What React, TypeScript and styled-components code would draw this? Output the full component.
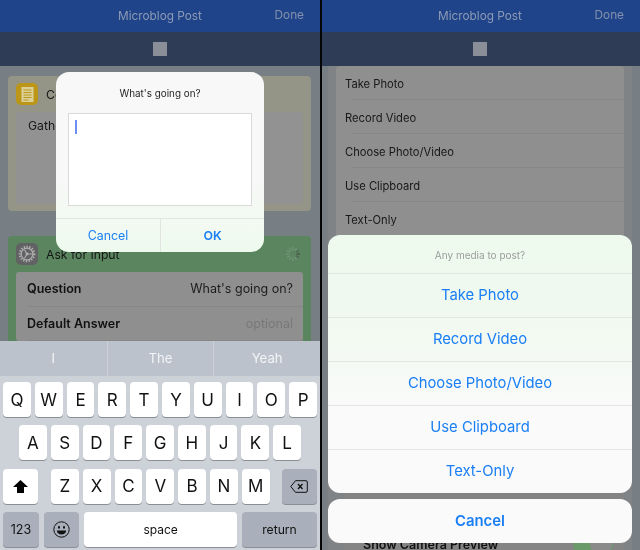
import React from 'react';
import styled, { createGlobalStyle } from 'styled-components';

const GlobalStyle = createGlobalStyle`
  html, body {
    margin: 0;
    padding: 0;
    background: #000;
  }
  * {
    box-sizing: border-box;
  }
`;

const Screen = styled.div`
  width: 640px;
  height: 550px;
  display: flex;
  overflow: hidden;
  font-family: Inter, "Liberation Sans", sans-serif;
  filter: blur(0.3px);
`;

const Phone = styled.div<{ $divided?: boolean }>`
  position: relative;
  width: 320px;
  height: 550px;
  display: flex;
  flex-direction: column;
  overflow: hidden;
  background: #777e84;

  ${(p) =>
    p.$divided &&
    `
    &::before {
      content: '';
      position: absolute;
      top: 0;
      bottom: 0;
      left: 0;
      width: 2px;
      background: #050505;
      z-index: 5;
    }
  `}
`;

const NavBar = styled.div`
  height: 32px;
  flex: none;
  position: relative;
  display: flex;
  align-items: center;
  justify-content: center;
  background: #20448a;
  color: #8c9ab5;
  font-size: 11.8px;
`;

const NavDone = styled.span`
  position: absolute;
  right: 16px;
  top: 8px;
  color: #8290ad;
`;

const ToolBar = styled.div`
  height: 34px;
  flex: none;
  display: flex;
  align-items: center;
  justify-content: center;
  background: #2e3d55;
`;

const StopSquare = styled.div`
  width: 14px;
  height: 14px;
  background: #898e98;
`;

const Body = styled.div`
  flex: 1;
  min-height: 0;
  overflow: hidden;
  padding: 10px 9px 0 8px;
`;

const Card = styled.div<{ $tone: string; $height?: number }>`
  background: ${(p) => p.$tone};
  border-radius: 4px;
  padding: 7px 8px 7px;
  margin-bottom: 25px;
  height: ${(p) => (p.$height ? `${p.$height}px` : 'auto')};
`;

const CardHead = styled.div`
  height: 22px;
  display: flex;
  align-items: center;
  gap: 8px;
  font-size: 12.2px;
  color: #161616;
  margin-bottom: 7px;
`;

const IconTile = styled.div<{ $tone: string }>`
  width: 22px;
  height: 22px;
  flex: none;
  border-radius: 5px;
  display: flex;
  align-items: center;
  justify-content: center;
  background: ${(p) => p.$tone};
`;

const Spinner = styled.svg`
  margin-left: auto;
  margin-right: 2px;
`;

const NoteBody = styled.div`
  height: 92px;
  padding: 6px 12px;
  border-radius: 3px;
  background: #929292;
  font-size: 12.2px;
  line-height: 16px;
  color: #161616;
`;

const FieldList = styled.div`
  background: #8f8f8f;
  border-radius: 3px;
  padding-left: 11px;
`;

const FieldRow = styled.div`
  height: 34.5px;
  display: flex;
  align-items: center;
  justify-content: space-between;
  padding-right: 10px;
  font-size: 12.5px;
  color: #1c1c1c;
  border-bottom: 1px solid #878787;
`;

const FieldName = styled.span`
  font-weight: 600;
  color: #111;
`;

const FieldValue = styled.span<{ $muted?: boolean }>`
  color: ${(p) => (p.$muted ? '#787878' : '#1c1c1c')};
`;

/* alert */
const Alert = styled.div`
  position: absolute;
  left: 56px;
  top: 72px;
  width: 208px;
  height: 180px;
  border-radius: 13px;
  display: flex;
  flex-direction: column;
  background: linear-gradient(180deg, #f8f8f8 0%, #f7f8f7 62%, #eefaee 100%);
`;

const AlertTitle = styled.div`
  height: 41px;
  flex: none;
  padding-top: 14px;
  text-align: center;
  font-size: 9.9px;
  line-height: 14px;
  color: #1d1d1d;
`;

const AlertInput = styled.div`
  height: 93px;
  margin: 0 12px;
  flex: none;
  padding: 6px;
  background: #fff;
  border: 1px solid #dadada;
`;

const Caret = styled.div`
  width: 2px;
  height: 14px;
  background: #6c8ef5;
`;

const AlertButtons = styled.div`
  margin-top: 12px;
  flex: 1;
  display: grid;
  grid-template-columns: 104px 104px;
  border-top: 1px solid #e1e4e1;
`;

const AlertButton = styled.div<{ $bold?: boolean }>`
  display: flex;
  align-items: center;
  justify-content: center;
  font-size: 12.4px;
  font-weight: ${(p) => (p.$bold ? 600 : 400)};
  color: #1a7ff5;
  & + & {
    border-left: 1px solid #e1e4e1;
  }
`;

/* keyboard */
const Keyboard = styled.div`
  height: 209px;
  flex: none;
  background: #cdd2d9;
`;

const Suggestions = styled.div`
  height: 35px;
  display: grid;
  grid-template-columns: repeat(3, 1fr);
  background: #bbc2cb;
`;

const Suggestion = styled.div`
  display: flex;
  align-items: center;
  justify-content: center;
  padding-bottom: 2px;
  font-size: 13.2px;
  color: #f2f4f6;
  & + & {
    border-left: 1px solid #ccd1d8;
  }
`;

const KeyRows = styled.div`
  padding: 6px 3.3px 0;
  display: flex;
  flex-direction: column;
  gap: 8.4px;
`;

const KeyRow = styled.div<{ $between?: boolean }>`
  display: flex;
  justify-content: ${(p) => (p.$between ? 'space-between' : 'center')};
  gap: 4px;
`;

const Key = styled.div<{ $width?: number; $grey?: boolean; $size?: number }>`
  width: ${(p) => p.$width ?? 27.8}px;
  height: 35px;
  flex: none;
  display: flex;
  align-items: center;
  justify-content: center;
  border-radius: 4px;
  background: ${(p) => (p.$grey ? '#a9b0bc' : '#fff')};
  box-shadow: 0 1px 0 #8b8f95;
  font-size: ${(p) => p.$size ?? 17}px;
  color: #111;
`;

const LetterGroup = styled.div`
  display: flex;
  gap: 4px;
`;

/* right phone */
const Column = styled.div`
  flex: 1;
  min-height: 0;
  overflow: hidden;
  margin: 0 8px;
  padding: 0 8px;
  background: #808386;
`;

const OptionList = styled.div`
  background: #8f8f8f;
  border-radius: 4px 4px 0 0;
  padding-left: 9px;
`;

const OptionRow = styled.div`
  height: 34px;
  display: flex;
  align-items: center;
  padding-top: 2px;
  font-size: 11.2px;
  color: #181818;
  position: relative;
  &::after {
    content: '';
    position: absolute;
    left: 6px;
    right: 0;
    bottom: 0;
    height: 1px;
    background: #878787;
  }
`;

const PreviewList = styled.div`
  margin: 250px 0 0 8px;
  height: 80px;
  padding: 51px 11px 0 19px;
  background: #848484;
  display: flex;
  justify-content: space-between;
  font-size: 12.5px;
  font-weight: 600;
  color: #111;
`;

const Toggle = styled.div`
  width: 40px;
  height: 24px;
  margin-top: -5px;
  border-radius: 12px;
  background: #6a9a6a;
  display: flex;
  justify-content: flex-end;
`;

const ToggleKnob = styled.div`
  width: 22px;
  height: 22px;
  margin: 1px;
  border-radius: 50%;
  background: #8a8a8a;
`;

const Sheet = styled.div`
  position: absolute;
  left: 8px;
  top: 235px;
  width: 304px;
  z-index: 2;
`;

const SheetGroup = styled.div`
  border-radius: 12px;
  overflow: hidden;
  background: linear-gradient(180deg, #eefaee 0%, #f0f9ef 30%, #f9faf9 65%, #fafafa 100%);
`;

const SheetTitle = styled.div`
  height: 37.5px;
  display: flex;
  align-items: center;
  justify-content: center;
  padding-top: 2px;
  font-size: 10px;
  color: #9a9e9b;
`;

const SheetAction = styled.div`
  height: 44px;
  display: flex;
  align-items: center;
  justify-content: center;
  border-top: 1px solid #e3e7e3;
  font-size: 14.8px;
  color: #1a7ff5;
`;

const SheetCancel = styled(SheetGroup)`
  margin-top: 6.5px;
  height: 44px;
  display: flex;
  align-items: center;
  justify-content: center;
  background: #fafafa;
  font-size: 14.9px;
  font-weight: 600;
  color: #1a7ff5;
`;

const NoteIcon = () => (
  <svg width="13" height="15" viewBox="0 0 13 15">
    <rect x="0.5" y="0" width="12" height="15" fill="#dccf98" />
    <path d="M2.5 3h8M2.5 5.5h8M2.5 8h8M2.5 10.5h8M2.5 13h5" stroke="#bc9a18" strokeWidth="1" />
  </svg>
);

const GearIcon = () => (
  <svg width="18" height="18" viewBox="0 0 18 18" fill="none" stroke="#b0b0b0">
    <circle cx="9" cy="9" r="7.3" strokeWidth="2" strokeDasharray="1.4 1.4" />
    <circle cx="9" cy="9" r="5.8" strokeWidth="1.2" />
    <path d="M9 9L14 9M9 9L6.5 4.7M9 9L6.5 13.3" strokeWidth="1.1" />
    <circle cx="9" cy="9" r="1.4" fill="#b0b0b0" stroke="none" />
  </svg>
);

const SpinnerIcon = () => (
  <Spinner width="16" height="16" viewBox="-8 -8 16 16">
    {Array.from({ length: 12 }, (_, i) => (
      <line
        key={i}
        x1="0"
        y1="-3.5"
        x2="0"
        y2="-7"
        stroke={i === 3 ? '#3f4f42' : i === 2 || i === 4 ? '#4e6353' : '#739878'}
        strokeWidth="1.2"
        transform={`rotate(${i * 30})`}
      />
    ))}
  </Spinner>
);

const ShiftIcon = () => (
  <svg width="15" height="13" viewBox="0 0 15 13">
    <path d="M7.5 0L15 7H11V13H4V7H0Z" fill="#000" />
  </svg>
);

const BackspaceIcon = () => (
  <svg width="18" height="13" viewBox="0 0 18 13" fill="none" stroke="#111" strokeWidth="1">
    <path d="M5.5 0.7H16a1.3 1.3 0 0 1 1.3 1.3V11a1.3 1.3 0 0 1-1.3 1.3H5.5L0.8 6.5Z" />
    <path d="M8 4L12.5 9M12.5 4L8 9" strokeWidth="1.3" />
  </svg>
);

const EmojiIcon = () => (
  <svg width="17" height="17" viewBox="0 0 17 17" fill="none" stroke="#111" strokeWidth="1">
    <circle cx="8.5" cy="8.5" r="7.7" />
    <ellipse cx="6" cy="6.3" rx="1" ry="1.5" fill="#111" stroke="none" />
    <ellipse cx="11" cy="6.3" rx="1" ry="1.5" fill="#111" stroke="none" />
    <path d="M3.8 9.5H13.2C13 12 11 13.5 8.5 13.5S4 12 3.8 9.5Z" fill="#111" stroke="none" />
  </svg>
);

const TopBars = () => (
  <>
    <NavBar>
      Microblog Post
      <NavDone>Done</NavDone>
    </NavBar>
    <ToolBar>
      <StopSquare />
    </ToolBar>
  </>
);

const topRow = ['Q', 'W', 'E', 'R', 'T', 'Y', 'U', 'I', 'O', 'P'];
const midRow = ['A', 'S', 'D', 'F', 'G', 'H', 'J', 'K', 'L'];
const lowRow = ['Z', 'X', 'C', 'V', 'B', 'N', 'M'];
const options = ['Take Photo', 'Record Video', 'Choose Photo/Video', 'Use Clipboard', 'Text-Only'];

export default function App() {
  return (
    <Screen>
      <GlobalStyle />
      <Phone>
        <TopBars />
        <Body>
          <Card $tone="#949487" $height={135}>
            <CardHead>
              <IconTile $tone="#bc9616">
                <NoteIcon />
              </IconTile>
              Comment
            </CardHead>
            <NoteBody>Gather input</NoteBody>
          </Card>
          <Card $tone="#5b855f">
            <CardHead>
              <IconTile $tone="#626264">
                <GearIcon />
              </IconTile>
              Ask for Input
              <SpinnerIcon />
            </CardHead>
            <FieldList>
              <FieldRow>
                <FieldName>Question</FieldName>
                <FieldValue>What's going on?</FieldValue>
              </FieldRow>
              <FieldRow>
                <FieldName>Default Answer</FieldName>
                <FieldValue $muted>optional</FieldValue>
              </FieldRow>
            </FieldList>
          </Card>
        </Body>
        <Keyboard>
          <Suggestions>
            <Suggestion>I</Suggestion>
            <Suggestion>The</Suggestion>
            <Suggestion>Yeah</Suggestion>
          </Suggestions>
          <KeyRows>
            <KeyRow>
              {topRow.map((k) => (
                <Key key={k}>{k}</Key>
              ))}
            </KeyRow>
            <KeyRow>
              {midRow.map((k) => (
                <Key key={k}>{k}</Key>
              ))}
            </KeyRow>
            <KeyRow $between>
              <Key $width={35}>
                <ShiftIcon />
              </Key>
              <LetterGroup>
                {lowRow.map((k) => (
                  <Key key={k}>{k}</Key>
                ))}
              </LetterGroup>
              <Key $width={34.5} $grey>
                <BackspaceIcon />
              </Key>
            </KeyRow>
            <KeyRow $between>
              <Key $width={35.4} $grey $size={12.5}>
                123
              </Key>
              <Key $width={35.4} $grey>
                <EmojiIcon />
              </Key>
              <Key $width={153.6} $size={12}>
                space
              </Key>
              <Key $width={74.4} $grey $size={12.2}>
                return
              </Key>
            </KeyRow>
          </KeyRows>
        </Keyboard>
        <Alert>
          <AlertTitle>What's going on?</AlertTitle>
          <AlertInput>
            <Caret />
          </AlertInput>
          <AlertButtons>
            <AlertButton>Cancel</AlertButton>
            <AlertButton $bold>OK</AlertButton>
          </AlertButtons>
        </Alert>
      </Phone>
      <Phone $divided>
        <TopBars />
        <Column>
          <OptionList>
            {options.map((o) => (
              <OptionRow key={o}>{o}</OptionRow>
            ))}
          </OptionList>
          <PreviewList>
            Show Camera Preview
            <Toggle>
              <ToggleKnob />
            </Toggle>
          </PreviewList>
        </Column>
        <Sheet>
          <SheetGroup>
            <SheetTitle>Any media to post?</SheetTitle>
            {options.map((o) => (
              <SheetAction key={o}>{o}</SheetAction>
            ))}
          </SheetGroup>
          <SheetCancel>Cancel</SheetCancel>
        </Sheet>
      </Phone>
    </Screen>
  );
}
